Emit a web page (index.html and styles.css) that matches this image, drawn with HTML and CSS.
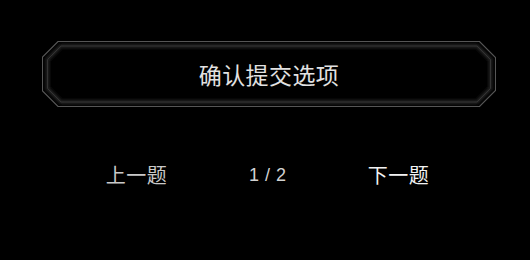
FILE: index.html
```html
<!DOCTYPE html>
<html lang="zh-CN">
<head>
<meta charset="utf-8">
<title>确认提交选项</title>
<link rel="stylesheet" href="styles.css">
</head>
<body>
<main class="page">
  <div class="confirm">
    <svg class="confirm-frame" viewBox="0 0 454 66" width="454" height="66" aria-hidden="true">
      <defs>
        <filter id="glow" x="-5%" y="-20%" width="110%" height="140%">
          <feGaussianBlur stdDeviation="1.8"/>
        </filter>
      </defs>
      <polygon class="outer" points="16,0.5 437.5,0.5 453.5,16.5 453.5,49.5 437.5,65.5 16,65.5 0.5,50 0.5,16"/>
      <polygon class="inner-glow" filter="url(#glow)" points="19,5 435,5 448.5,18.5 448.5,47.5 435,61 19,61 5.5,47.5 5.5,18.5"/>
      <polygon class="inner" points="19,5 435,5 448.5,18.5 448.5,47.5 435,61 19,61 5.5,47.5 5.5,18.5"/>
    </svg>
    <span class="confirm-label">确认提交选项</span>
  </div>
  <nav class="pager">
    <span class="pager-prev">上一题</span>
    <span class="pager-count">1 / 2</span>
    <span class="pager-next">下一题</span>
  </nav>
</main>
</body>
</html>
```
FILE: styles.css
```css
html, body {
  margin: 0;
  padding: 0;
  background: #000;
}
body {
  width: 530px;
  height: 260px;
  overflow: hidden;
  font-family: "Noto Sans CJK SC", "Noto Sans", sans-serif;
}
.page {
  padding: 41px 0 0 42px;
}
.confirm {
  display: grid;
  width: 454px;
  height: 66px;
}
.confirm-frame,
.confirm-label {
  grid-area: 1 / 1;
}
.confirm-frame {
  display: block;
}
.outer {
  fill: #000;
  stroke: #585858;
  stroke-width: 1.1;
}
.inner-glow {
  fill: none;
  stroke: #262626;
  stroke-width: 3.5;
}
.inner {
  fill: none;
  stroke: #333;
  stroke-width: 1;
}
.confirm-label {
  align-self: center;
  justify-self: center;
  color: #e2e2e2;
  font-size: 23px;
  line-height: 30px;
  letter-spacing: 0.4px;
}
.pager {
  display: grid;
  grid-template-columns: repeat(3, 131px);
  margin: 56px 0 0 29px;
  align-items: center;
  height: 24px;
}
.pager > span {
  justify-self: center;
  line-height: 24px;
}
.pager-prev {
  color: #c9c9c9;
  font-size: 20px;
  letter-spacing: 0.5px;
}
.pager-count {
  color: #d2d2d2;
  font-family: "Liberation Sans", sans-serif;
  font-size: 18px;
  word-spacing: 1px;
}
.pager-next {
  color: #f2f2f2;
  font-size: 20px;
  letter-spacing: 0.5px;
}
```
